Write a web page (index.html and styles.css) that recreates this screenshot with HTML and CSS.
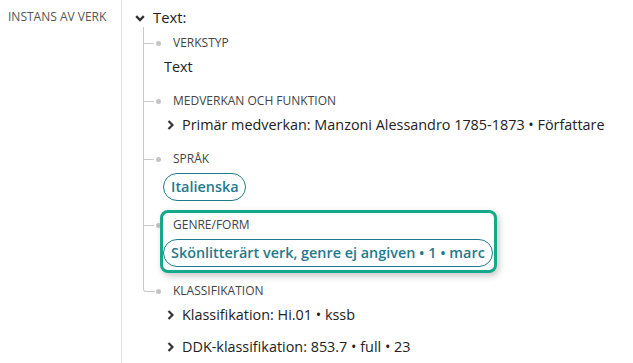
FILE: index.html
```html
<!DOCTYPE html>
<html lang="sv">
<head>
<meta charset="utf-8">
<title>Instans av verk</title>
<link rel="stylesheet" href="styles.css">
</head>
<body>
<div class="page">
  <div class="side">INSTANS AV VERK</div>
  <div class="main">
    <div class="head">
      <svg class="chev-down" width="10" height="7" viewBox="0 0 10 7"><path d="M1.2 1.2 L5 5 L8.8 1.2" fill="none" stroke="#333" stroke-width="2.4"/></svg>
      <span>Text:</span>
    </div>
    <ul class="tree">
      <li class="item">
        <div class="node">
          <div class="label">VERKSTYP</div>
          <div class="plain">Text</div>
        </div>
      </li>
      <li class="item">
        <div class="node">
          <div class="label">MEDVERKAN OCH FUNKTION</div>
          <div class="links">
            <div class="link"><svg class="chev-right" width="7" height="10" viewBox="0 0 7 10"><path d="M1.5 1 L5.5 5 L1.5 9" fill="none" stroke="#333" stroke-width="2.2"/></svg><span>Primär medverkan: Manzoni Alessandro 1785-1873 • Författare</span></div>
          </div>
        </div>
      </li>
      <li class="item">
        <div class="node">
          <div class="label">SPRÅK</div>
          <span class="pill">Italienska</span>
        </div>
      </li>
      <li class="item">
        <div class="node focused">
          <div class="label">GENRE/FORM</div>
          <span class="pill">Skönlitterärt verk, genre ej angiven • 1 • marc</span>
        </div>
      </li>
      <li class="item last">
        <div class="node">
          <div class="label">KLASSIFIKATION</div>
          <div class="links">
            <div class="link"><svg class="chev-right" width="7" height="10" viewBox="0 0 7 10"><path d="M1.5 1 L5.5 5 L1.5 9" fill="none" stroke="#333" stroke-width="2.2"/></svg><span>Klassifikation: Hi.01 • kssb</span></div>
            <div class="link"><svg class="chev-right" width="7" height="10" viewBox="0 0 7 10"><path d="M1.5 1 L5.5 5 L1.5 9" fill="none" stroke="#333" stroke-width="2.2"/></svg><span>DDK-klassifikation: 853.7 • full • 23</span></div>
          </div>
        </div>
      </li>
    </ul>
  </div>
</div>
</body>
</html>
```
FILE: styles.css
```css
* { box-sizing: border-box; }
html, body { margin: 0; padding: 0; background: #fff; }
body {
  font-family: "Open Sans", "DejaVu Sans", sans-serif;
  color: #222;
  font-size: 14.4px;
}
.page {
  display: flex;
  min-height: 100vh;
}
.side {
  width: 122px;
  flex: none;
  padding: 8px 0 0 8px;
  border-right: 1px solid #e2e2e2;
  font-size: 12px;
  line-height: 18px;
  color: #555;
}
.main {
  flex: 1;
  padding: 7px 0 0 13px;
}
.head {
  display: flex;
  align-items: center;
  height: 20px;
  line-height: 20px;
  font-size: 14.8px;
}
.chev-down { margin-right: 8px; margin-top: 2px; }
.tree {
  list-style: none;
  margin: 0 0 0 8px;
  padding: 0;
}
.item {
  position: relative;
  padding: 4px 0 5px 19px;
  border-left: 1px solid #c9c9c9;
}
.item::before {
  content: "";
  position: absolute;
  left: 0;
  top: 16px;
  width: 10px;
  border-top: 1px solid #c9c9c9;
}
.item::after {
  content: "";
  position: absolute;
  left: 12px;
  top: 14px;
  width: 5px;
  height: 5px;
  border-radius: 50%;
  background: #c4c4c4;
}
.item.last {
  border-left-color: transparent;
}
.item.last::before {
  left: -1px;
  top: 0;
  height: 16px;
  width: 11px;
  border-top: 0;
  border-left: 1px solid #c9c9c9;
  border-bottom: 1px solid #c9c9c9;
  border-bottom-left-radius: 3px;
  box-sizing: content-box;
}
.node {
  width: fit-content;
  padding: 4px 0 3px;
  position: relative;
  z-index: 1;
}
.node.focused {
  border-radius: 5px;
  background: #fff;
  box-shadow: 0 0 0 3px #16a88b, 2px 3px 7px 3px rgba(0, 0, 0, 0.22);
  padding-right: 1px;
}
.label {
  margin-left: 10px;
  font-size: 12px;
  line-height: 16px;
  color: #444;
  margin-bottom: 6px;
}
.plain {
  margin-left: 1px;
  line-height: 20px;
}
.pill {
  display: inline-block;
  height: 28px;
  line-height: 26px;
  padding: 0 7px;
  border: 1px solid #1f7b8b;
  border-radius: 14px;
  color: #1f7a8c;
  font-weight: 600;
}
.links {
  margin-top: 3px;
  display: flex;
  flex-direction: column;
  gap: 12px;
}
.link {
  display: flex;
  align-items: center;
  line-height: 20px;
  padding-left: 4px;
}
.chev-right {
  margin-right: 8px;
  flex: none;
}
```
